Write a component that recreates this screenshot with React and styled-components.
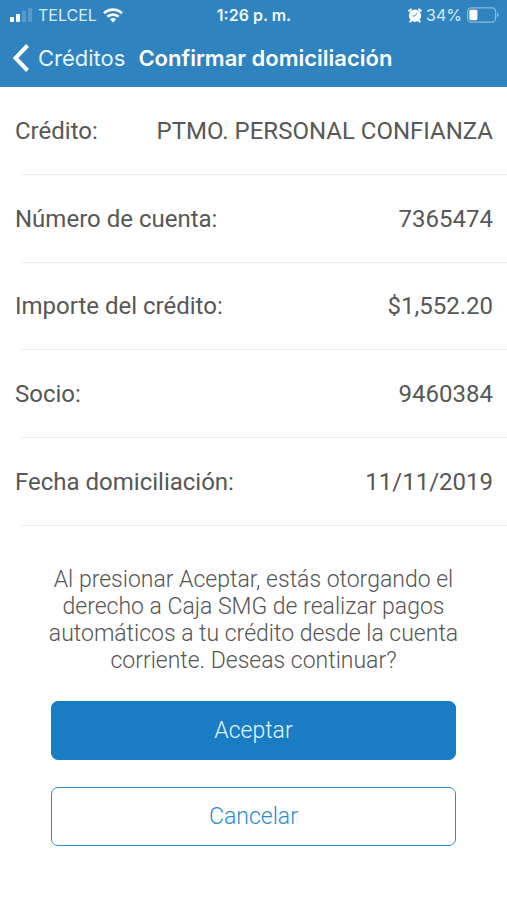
import React from "react";
import styled, { createGlobalStyle } from "styled-components";

const Global = createGlobalStyle`
  * { box-sizing: border-box; }
  body { margin: 0; background: #fff; font-family: Roboto, "Liberation Sans", sans-serif; }
`;
const Screen = styled.div`
  min-height: 100vh;
  display: flex;
  flex-direction: column;
  background: #fff;
`;
const TopArea = styled.header`
  background: #2f83be;
  color: #fff;
  font-family: Inter, "Liberation Sans", sans-serif;
`;
const StatusBar = styled.div`
  height: 30px;
  display: grid;
  grid-template-columns: 1fr auto 1fr;
  align-items: center;
  padding: 0 8px 0 9px;
  font-size: 16px;
`;
const StatusGroup = styled.div`
  display: flex;
  align-items: center;
  gap: ${(p) => (p.$end ? "4px" : "6px")};
  justify-content: ${(p) => (p.$end ? "flex-end" : "flex-start")};
  color: #d9eefb;
`;
const Clock = styled.time`
  font-weight: 600;
  color: #eef8ff;
`;
const Glyph = styled.svg`
  display: block;
  flex: none;
`;
const NavBar = styled.nav`
  height: 57px;
  display: flex;
  align-items: center;
  gap: 13px;
  padding: 0 12px 2px;
`;
const BackLink = styled.a`
  display: flex;
  align-items: center;
  gap: 8px;
  color: #e6f5ff;
  font-size: 22px;
  text-decoration: none;
`;
const Title = styled.h1`
  margin: 0;
  font-size: 22px;
  font-weight: 600;
  white-space: nowrap;
`;
const Details = styled.dl`
  margin: 0;
  min-height: 439px;
  display: grid;
  grid-auto-rows: 1fr;
`;
const Row = styled.div`
  display: flex;
  justify-content: space-between;
  align-items: center;
  padding: 0 14px 0 15px;
  font-size: 24px;
  line-height: 28px;
  font-weight: 400;
  color: #575757;
  background: linear-gradient(#ececec, #ececec) 21px 100% / 100% 1px no-repeat;
`;
const Label = styled.dt``;
const Value = styled.dd`
  margin: 0;
`;
const Notice = styled.p`
  margin: 40px 40px 27px;
  text-align: center;
  font-size: 23px;
  line-height: 27px;
  font-weight: 300;
  color: #555;
`;
const Actions = styled.div`
  display: flex;
  flex-direction: column;
  gap: 27px;
  padding: 0 51px;
`;
const Button = styled.button`
  height: 59px;
  padding: 0 16px;
  border-radius: 7px;
  border: 1px solid ${(p) => (p.$primary ? "#1a7cc2" : "#2f8bcc")};
  background: ${(p) => (p.$primary ? "#1a7cc2" : "#fff")};
  color: ${(p) => (p.$primary ? "#e4f4ff" : "#2f8bcc")};
  font: 300 23px Roboto, sans-serif;
`;

const details = [
  ["Crédito:", "PTMO. PERSONAL CONFIANZA"],
  ["Número de cuenta:", "7365474"],
  ["Importe del crédito:", "$1,552.20"],
  ["Socio:", "9460384"],
  ["Fecha domiciliación:", "11/11/2019"],
];

const SignalIcon = () => (
  <Glyph width="23" height="14" viewBox="0 0 23 14" fill="#fff" aria-hidden="true">
    <rect x="1" y="9" width="4" height="5" rx="1" />
    <rect x="7" y="6" width="4" height="8" rx="1" />
    <rect x="13" y="3" width="4" height="11" rx="1" opacity=".2" />
    <rect x="19" y="0" width="4" height="14" rx="1" opacity=".2" />
  </Glyph>
);

const WifiIcon = () => (
  <Glyph width="20" height="15" viewBox="0 0 20 15" fill="none" stroke="#fff" strokeWidth="2.8" aria-hidden="true">
    <path d="M1 5.2C6 .4 14 .4 19 5.2" />
    <path d="M4.3 8.8c3.2-3 8.2-3 11.4 0" />
    <path d="M6.9 11.3c1.8-1.7 4.4-1.7 6.2 0L10 14.6z" fill="#fff" stroke="none" />
  </Glyph>
);

const AlarmIcon = () => (
  <Glyph width="14" height="15" viewBox="0 0 14 15" aria-hidden="true">
    <g stroke="#fff" strokeWidth="2" strokeLinecap="round">
      <path d="M1.2 2.8 2.9 1.4M12.8 2.8 11.1 1.4M2.2 13.6l1.4-1.4M11.8 13.6l-1.4-1.4" />
    </g>
    <circle cx="7" cy="7.7" r="6.2" fill="#fff" />
    <path d="M9 5.3 7 8H4.6" fill="none" stroke="#2f83be" strokeWidth=".8" strokeLinecap="round" />
  </Glyph>
);

const BatteryIcon = () => (
  <Glyph width="33" height="16" viewBox="0 0 33 16" aria-hidden="true">
    <rect x="1.6" y=".8" width="28" height="14.4" rx="3.6" fill="none" stroke="#fff" strokeWidth="1.2" opacity=".45" />
    <rect x="3.4" y="2.8" width="8" height="10.4" rx="1.4" fill="#fff" />
    <path d="M31 5.5c2 .8 2 4.2 0 5z" fill="#fff" opacity=".45" />
  </Glyph>
);

const BackIcon = () => (
  <Glyph width="18" height="30" viewBox="0 0 18 30" fill="none" stroke="#fff" strokeWidth="4" aria-hidden="true">
    <path d="M15.5 2.5 3.5 15l12 12.5" />
  </Glyph>
);

export default function App() {
  return (
    <Screen>
      <Global />
      <TopArea>
        <StatusBar>
          <StatusGroup>
            <SignalIcon />
            TELCEL
            <WifiIcon />
          </StatusGroup>
          <Clock>1:26 p. m.</Clock>
          <StatusGroup $end>
            <AlarmIcon />
            34%
            <BatteryIcon />
          </StatusGroup>
        </StatusBar>
        <NavBar>
          <BackLink href="#creditos">
            <BackIcon />
            Créditos
          </BackLink>
          <Title>Confirmar domiciliación</Title>
        </NavBar>
      </TopArea>
      <Details>
        {details.map(([label, value]) => (
          <Row key={label}>
            <Label>{label}</Label>
            <Value>{value}</Value>
          </Row>
        ))}
      </Details>
      <Notice>
        Al presionar Aceptar, estás otorgando el derecho a Caja SMG de realizar
        pagos automáticos a tu crédito desde la cuenta corriente. Deseas
        continuar?
      </Notice>
      <Actions>
        <Button type="button" $primary>Aceptar</Button>
        <Button type="button">Cancelar</Button>
      </Actions>
    </Screen>
  );
}
